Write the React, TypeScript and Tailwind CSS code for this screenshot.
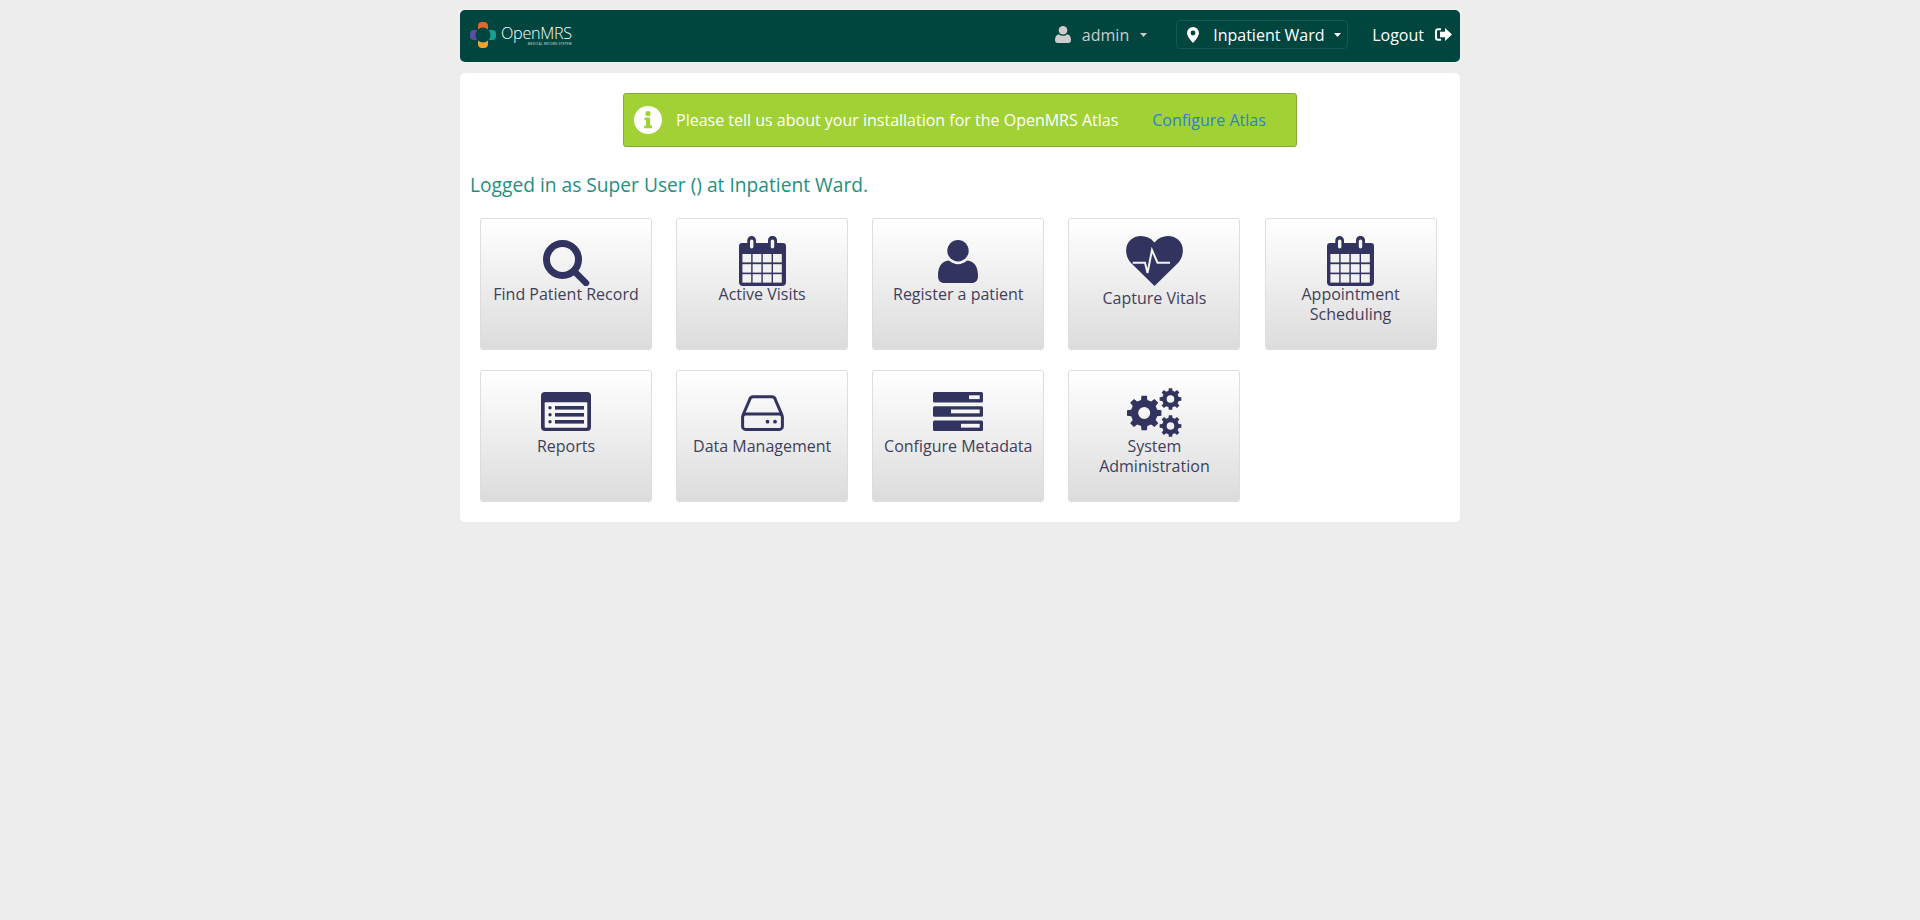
import React from "react";

const NAVY = "#33335f";

function gearPath(cx: number, cy: number, outer: number, root: number, hole: number, teeth: number, rot = 0) {
  const pts: string[] = [];
  for (let i = 0; i < teeth; i++) {
    const a = (i / teeth) * Math.PI * 2 + rot;
    const s = (Math.PI * 2) / teeth;
    const seq: [number, number][] = [
      [root, a - s * 0.3],
      [outer, a - s * 0.2],
      [outer, a + s * 0.2],
      [root, a + s * 0.3],
    ];
    for (const [r, t] of seq) pts.push(`${(cx + r * Math.cos(t)).toFixed(2)} ${(cy + r * Math.sin(t)).toFixed(2)}`);
  }
  const ring = `M${pts.join("L")}Z`;
  const h = `M${cx - hole} ${cy}a${hole} ${hole} 0 1 0 ${hole * 2} 0a${hole} ${hole} 0 1 0 ${-hole * 2} 0Z`;
  return ring + h;
}

function SearchIcon() {
  return (
    <svg viewBox="0 0 47 46" className="w-[47px] h-[46px] shrink-0 mt-[21px]">
      <circle cx="19.5" cy="19.5" r="16" fill="none" stroke={NAVY} strokeWidth="7" />
      <path d="M32 32L43 43" stroke={NAVY} strokeWidth="6.5" strokeLinecap="round" />
    </svg>
  );
}

function CalendarIcon() {
  const xs = [3.4, 13.6, 23.8, 34];
  const ys = [18, 28.2, 38.2];
  return (
    <svg viewBox="0 0 47 50" className="w-[47px] h-[50px] shrink-0 mt-[17px]">
      <path d="M3 7H8.3V4.3A4.3 4.3 0 0 1 17 4.3V7H29V4.3A4.3 4.3 0 0 1 38 4.3V7H44A3 3 0 0 1 47 10V46A4 4 0 0 1 43 50H4A4 4 0 0 1 0 46V10A3 3 0 0 1 3 7Z" fill={NAVY} />
      <rect x="11" y="3.5" width="3.4" height="9" rx="1.7" fill="#f5f5f5" />
      <rect x="31.8" y="3.5" width="3.4" height="9" rx="1.7" fill="#f5f5f5" />
      {ys.map((y) => xs.map((x) => <rect key={`${x}-${y}`} x={x} y={y} width="8.8" height="8.4" fill="#f1f1f1" />))}
    </svg>
  );
}

function UserIcon() {
  return (
    <svg viewBox="0 0 40 43" className="w-[40px] h-[43px] shrink-0 mt-[21px]">
      <circle cx="20" cy="10.7" r="10.7" fill={NAVY} />
      <path d="M0 36C0 27 3 21.5 11 20.5C14 23.2 17 24.2 20 24.2C23 24.2 26 23.2 29 20.5C37 21.5 40 27 40 36C40 41 37 43 34 43H6C3 43 0 41 0 36Z" fill={NAVY} />
    </svg>
  );
}

function HeartIcon() {
  return (
    <svg viewBox="0 0 57 50" className="w-[57px] h-[50px] shrink-0 mt-[17px]">
      <path d="M28.5 50L5 27C-1.5 20-1.5 8.5 5 3.5C12-1.8 22-1 28.5 6.5C35-1 45-1.8 52 3.5C58.5 8.5 58.5 20 52 27Z" fill={NAVY} />
      <path d="M6.7 26.7H19L21.5 37L26 14L31.5 26.7H44" fill="none" stroke="#f3f3f3" strokeWidth="2" />
    </svg>
  );
}

function ReportsIcon() {
  return (
    <svg viewBox="0 0 50 39" className="w-[50px] h-[39px] shrink-0 mt-[21px]">
      <rect width="50" height="39" rx="4" fill={NAVY} />
      <rect x="3.7" y="10.3" width="42.6" height="25.4" rx="1" fill="#f6f6f6" />
      {[15.8, 22.8, 29.8].map((y) => (
        <g key={y} fill={NAVY}>
          <circle cx="9" cy={y} r="1.7" />
          <rect x="14" y={y - 1.8} width="29" height="3.6" />
        </g>
      ))}
    </svg>
  );
}

function DiskIcon() {
  return (
    <svg viewBox="0 0 43 36" className="w-[43px] h-[36px] shrink-0 mt-[24px]">
      <path d="M2 20L8.5 5A4 4 0 0 1 12.2 1.8H30.8A4 4 0 0 1 34.5 5L41 20" fill="none" stroke={NAVY} strokeWidth="3" />
      <rect x="1.6" y="19" width="39.8" height="15.4" rx="3" fill="none" stroke={NAVY} strokeWidth="3" />
      <circle cx="26.5" cy="26.7" r="1.9" fill={NAVY} />
      <circle cx="34" cy="26.7" r="1.9" fill={NAVY} />
    </svg>
  );
}

function MetadataIcon() {
  const rows = [
    { y: 0, x: 36 },
    { y: 14.2, x: 18 },
    { y: 28.5, x: 28 },
  ];
  return (
    <svg viewBox="0 0 50 39" className="w-[50px] h-[39px] shrink-0 mt-[21px]">
      {rows.map((r) => (
        <g key={r.y}>
          <rect y={r.y} width="50" height="10.5" rx="1.5" fill={NAVY} />
          <rect x={r.x} y={r.y + 3.3} width={46.7 - r.x} height="3.8" fill="#f6f6f6" />
        </g>
      ))}
    </svg>
  );
}

function GearsIcon() {
  return (
    <svg viewBox="0 0 55 49" className="w-[55px] h-[49px] shrink-0 mt-[17px]">
      <path fillRule="evenodd" d={gearPath(17.2, 25, 17.4, 13.4, 6, 8)} fill={NAVY} />
      <path fillRule="evenodd" d={gearPath(43.5, 11, 11, 8.4, 3.8, 8)} fill={NAVY} />
      <path fillRule="evenodd" d={gearPath(43.5, 38, 11, 8.4, 3.8, 8)} fill={NAVY} />
    </svg>
  );
}

function Logo() {
  return (
    <svg viewBox="0 0 26 26" className="w-[26px] h-[26px] shrink-0">
      <path d="M8 4C8 1.5 9.5 0 12 0H14C16.5 0 18 1.5 18 4V7.4A7.5 7.5 0 0 0 8 7.4Z" fill="#e8662c" />
      <path d="M8 18.6A7.5 7.5 0 0 0 18 18.6V22C18 24.5 16.5 26 14 26H12C9.5 26 8 24.5 8 22Z" fill="#f0a22e" />
      <path d="M3.5 8H7.4A7.5 7.5 0 0 0 7.4 18H3.5C1.5 18 0 16.5 0 14.5V11.5C0 9.5 1.5 8 3.5 8Z" fill="#5a4f9e" />
      <path d="M18.6 8H22.5C24.5 8 26 9.5 26 11.5V14.5C26 16.5 24.5 18 22.5 18H18.6A7.5 7.5 0 0 0 18.6 8Z" fill="#17a094" />
    </svg>
  );
}

function Caret({ color }: { color: string }) {
  return (
    <svg viewBox="0 0 7 4" className="w-[7px] h-[4px] shrink-0">
      <path d="M0 0H7L3.5 4Z" fill={color} />
    </svg>
  );
}

function Header() {
  return (
    <header className="flex items-center justify-between h-[52px] bg-[#00463f] rounded-[5px]">
      <div className="flex items-center ml-[10px] pb-[2px]">
        <Logo />
        <div className="flex flex-col ml-[5px] text-white leading-none">
          <span className="text-[16.2px] leading-[18px] font-light tracking-[-0.3px]">OpenMRS</span>
          <span className="text-[3px] leading-[4px] text-right font-semibold tracking-[0.3px] text-[#b8cdc9]">MEDICAL RECORD SYSTEM</span>
        </div>
      </div>
      <div className="flex items-center text-[16px] pb-[3px]">
        <svg viewBox="0 0 16 17" className="w-[16px] h-[17px] shrink-0">
          <circle cx="8" cy="4.3" r="4.3" fill="#cccccc" />
          <path d="M0 14C0 11 1 8.6 4 8.2C5 9.3 6.5 9.8 8 9.8C9.5 9.8 11 9.3 12 8.2C15 8.6 16 11 16 14C16 16 15 17 13.5 17H2.5C1 17 0 16 0 14Z" fill="#cccccc" />
        </svg>
        <span className="ml-[11px] text-[#cccccc]">admin</span>
        <span className="ml-[11px]"><Caret color="#cccccc" /></span>
        <div className="flex items-center h-[29px] ml-[29px] w-[172px] border border-[#0c5a52] rounded-[4px] pl-[10px]">
          <svg viewBox="0 0 12 16" className="w-[12px] h-[16px] shrink-0">
            <path fillRule="evenodd" d="M6 0A6 6 0 0 1 12 6C12 9 8 14 6 16C4 14 0 9 0 6A6 6 0 0 1 6 0ZM6 3.6A2.4 2.4 0 1 0 6 8.4A2.4 2.4 0 1 0 6 3.6Z" fill="#ffffff" />
          </svg>
          <span className="ml-[14px] text-white">Inpatient Ward</span>
          <span className="ml-[9px]"><Caret color="#ffffff" /></span>
        </div>
        <span className="ml-[24px] text-white">Logout</span>
        <svg viewBox="0 0 17 13" className="ml-[11px] mr-[8px] w-[17px] h-[13px] shrink-0">
          <path d="M6 1.2H3A2 2 0 0 0 1 3.2V9.8A2 2 0 0 0 3 11.8H6" fill="none" stroke="#ffffff" strokeWidth="2" />
          <path d="M10 0L17 6.5L10 13V9.2H5V3.8H10Z" fill="#ffffff" />
        </svg>
      </div>
    </header>
  );
}

function Banner() {
  return (
    <div className="flex items-center mx-auto w-[674px] h-[54px] bg-[#a1d135] border border-[#88a838] rounded-[3px] text-[16px] text-white">
      <svg viewBox="0 0 28 28" className="ml-[10px] w-[28px] h-[28px] shrink-0">
        <circle cx="14" cy="14" r="14" fill="#ffffff" />
        <circle cx="14" cy="7.6" r="2.6" fill="#a1d135" />
        <path d="M10.6 11.5H16.2V19.4H18V22.2H10.2V19.4H12V14.3H10.6Z" fill="#a1d135" />
      </svg>
      <span className="ml-[14px]">Please tell us about your installation for the OpenMRS Atlas</span>
      <a className="ml-[34px] text-[#2d7fd6]">Configure Atlas</a>
    </div>
  );
}

const cards: { label: string; icon: React.ReactNode; extra?: string }[] = [
  { label: "Find Patient Record", icon: <SearchIcon /> },
  { label: "Active Visits", icon: <CalendarIcon /> },
  { label: "Register a patient", icon: <UserIcon /> },
  { label: "Capture Vitals", icon: <HeartIcon />, extra: "mt-1" },
  { label: "Appointment Scheduling", icon: <CalendarIcon /> },
  { label: "Reports", icon: <ReportsIcon /> },
  { label: "Data Management", icon: <DiskIcon /> },
  { label: "Configure Metadata", icon: <MetadataIcon /> },
  { label: "System Administration", icon: <GearsIcon /> },
];

function Card({ label, icon, extra }: { label: string; icon: React.ReactNode; extra?: string }) {
  return (
    <a className="flex flex-col items-center h-[132px] border border-[#dddddd] rounded-[3px] bg-gradient-to-b from-white to-[#dcdcdc] px-2 text-center text-[16px] leading-5 text-[#3f3f5c]">
      <div className="flex justify-center h-[65px] w-full">{icon}</div>
      <span className={extra}>{label}</span>
    </a>
  );
}

export default function App() {
  return (
    <div className="min-h-screen bg-[#ededed] pt-[10px] font-['Open_Sans',sans-serif]">
      <div className="w-[1000px] mx-auto">
        <Header />
        <main className="mt-[11px] bg-white rounded-[5px] pt-5 pb-5">
          <Banner />
          <h1 className="mt-[24px] ml-[10px] text-[19.2px] leading-7 font-normal text-[#1f8f80]">Logged in as Super User () at Inpatient Ward.</h1>
          <div className="grid grid-cols-[repeat(5,172px)] gap-x-[24.15px] gap-y-5 mt-[19px] ml-5">
            {cards.map((c) => (
              <Card key={c.label} {...c} />
            ))}
          </div>
        </main>
      </div>
    </div>
  );
}
